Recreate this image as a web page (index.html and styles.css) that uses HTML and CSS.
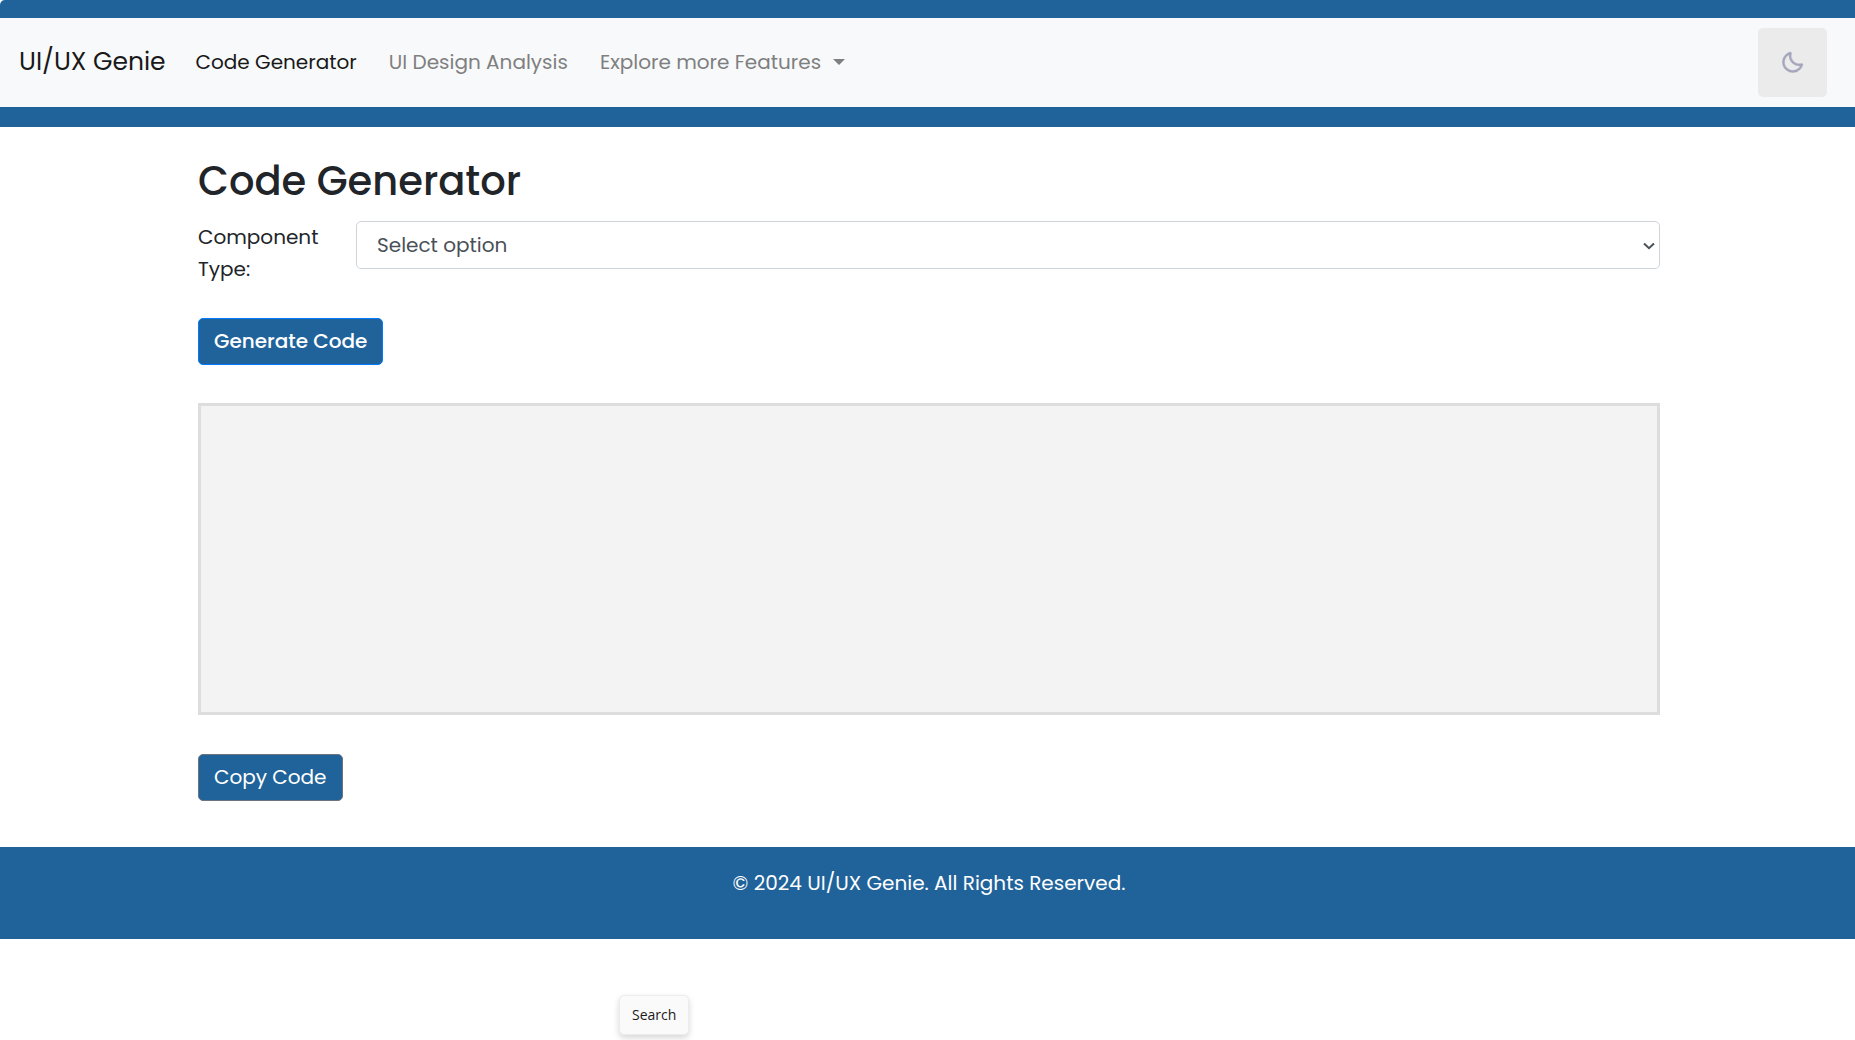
FILE: index.html
```html
<!DOCTYPE html>
<html lang="en">
<head>
  <meta charset="utf-8">
  <meta name="viewport" content="width=device-width, initial-scale=1">
  <title>UI/UX Genie - Code Generator</title>
  <link rel="stylesheet" href="styles.css">
</head>
<body>
  <header class="site-header">
    <nav class="navbar" aria-label="Main">
      <a class="brand" href="#">UI/UX Genie</a>
      <ul class="nav-list">
        <li><a class="nav-link active" href="#">Code Generator</a></li>
        <li><a class="nav-link" href="#">UI Design Analysis</a></li>
        <li><a class="nav-link dropdown" href="#">Explore more Features</a></li>
      </ul>
      <button class="theme-toggle" type="button" aria-label="Toggle dark mode">
        <svg width="25" height="25" viewBox="0 0 24 24" fill="none" aria-hidden="true">
          <path fill="#a5a5bc" stroke="#a5a5bc" stroke-width="0.4" d="M20.742 13.045a8.088 8.088 0 0 1-2.077.271c-2.135 0-4.14-.83-5.646-2.336a8.025 8.025 0 0 1-2.064-7.723A1 1 0 0 0 9.73 2.034a10.014 10.014 0 0 0-4.489 2.582c-3.898 3.898-3.898 10.243 0 14.143a9.937 9.937 0 0 0 7.072 2.93 9.93 9.93 0 0 0 7.07-2.929 10.007 10.007 0 0 0 2.583-4.491 1.001 1.001 0 0 0-1.224-1.224zm-2.772 4.301a7.947 7.947 0 0 1-5.656 2.343 7.953 7.953 0 0 1-5.658-2.344c-3.118-3.119-3.118-8.195 0-11.314a7.923 7.923 0 0 1 2.06-1.483 10.027 10.027 0 0 0 2.89 7.848 9.972 9.972 0 0 0 7.848 2.891 8.036 8.036 0 0 1-1.484 2.059z"/>
        </svg>
      </button>
    </nav>
  </header>

  <main class="container">
    <h1 class="title">Code Generator</h1>
    <form class="generator">
      <div class="form-row">
        <label class="form-label" for="component">Component Type:</label>
        <div class="select-wrap">
          <select class="select" id="component">
            <option>Select option</option>
          </select>
          <svg class="chevron" width="12" height="8" viewBox="0 0 12 8" fill="none" aria-hidden="true">
            <path d="M1 1.5 6 6.2 11 1.5" stroke="#495057" stroke-width="2"/>
          </svg>
        </div>
      </div>
      <button class="btn btn-primary" type="button">Generate Code</button>
      <textarea class="output" aria-label="Generated code" readonly></textarea>
      <button class="btn btn-secondary" type="button">Copy Code</button>
    </form>
  </main>

  <footer class="footer">© 2024 UI/UX Genie. All Rights Reserved.</footer>
  <div class="tooltip" role="tooltip">Search</div>
</body>
</html>
```
FILE: styles.css
```css
* {
  box-sizing: border-box;
}

body {
  margin: 0;
  background: #fff;
  color: #212529;
  font-family: Poppins, Inter, "Open Sans", sans-serif;
  font-size: 20px;
  line-height: 32px;
}

.site-header {
  padding: 18px 0 20px;
  background: #20639b;
  border-top-left-radius: 5px;
}

.navbar {
  display: flex;
  align-items: center;
  padding: 10px 28px 10px 19px;
  background: #f8f9fa;
}

.brand {
  margin-right: 30px;
  padding-bottom: 2px;
  color: #191919;
  font-size: 25px;
  text-decoration: none;
}

.nav-list {
  display: flex;
  gap: 32px;
  margin: 0;
  padding: 0 0 2px;
  list-style: none;
}

.nav-link {
  display: flex;
  align-items: center;
  color: #7f7f80;
  text-decoration: none;
}

.nav-link.active {
  color: #191919;
}

.dropdown::after {
  content: "";
  margin-left: 12px;
  border: 6px solid transparent;
  border-top-color: currentColor;
  border-bottom: 0;
}

.theme-toggle {
  display: flex;
  align-items: center;
  justify-content: center;
  width: 69px;
  height: 69px;
  margin-left: auto;
  padding: 0;
  border: 0;
  border-radius: 5px;
  background: #ebebeb;
}

.container {
  padding: 30px 195px 46px 198px;
}

.title {
  margin: 0 0 16px;
  font-size: 40px;
  font-weight: 500;
  line-height: 48px;
}

.generator {
  display: flex;
  flex-direction: column;
  align-items: flex-start;
}

.form-row {
  display: flex;
  width: 100%;
  margin-bottom: 33px;
}

.form-label {
  flex: none;
  width: 158px;
  padding-right: 30px;
}

.select-wrap {
  position: relative;
  flex: 1;
}

.select {
  display: block;
  width: 100%;
  height: 48px;
  padding: 0 20px;
  border: 1px solid #ced4da;
  border-radius: 5px;
  background: #fff;
  color: #495057;
  font: inherit;
  appearance: none;
}

.chevron {
  position: absolute;
  top: 21px;
  right: 5px;
  pointer-events: none;
}

.btn {
  height: 47px;
  padding: 0 15px 1px;
  border: 1px solid #007bff;
  border-radius: 5px;
  background: #20639b;
  color: #fff;
  font: inherit;
}

.btn-primary {
  font-weight: 500;
}

.btn-secondary {
  border-color: #6c757d;
}

.output {
  display: block;
  width: 100%;
  height: 312px;
  margin: 38px 0 39px;
  border: 3px solid #ddd;
  background: #f3f3f3;
  resize: none;
}

.footer {
  padding: 20px 0 40px 3px;
  background: #20639b;
  color: #fff;
  text-align: center;
}

.tooltip {
  position: absolute;
  top: 995px;
  left: 619px;
  padding: 7px 12px 8px;
  border: 1px solid #ececec;
  border-radius: 5px;
  background: #fafafa;
  box-shadow: 0 3px 6px rgba(0, 0, 0, 0.16);
  color: #1b1b1b;
  font-family: "Segoe UI", "Open Sans", sans-serif;
  font-size: 14px;
  line-height: 23px;
}
```
